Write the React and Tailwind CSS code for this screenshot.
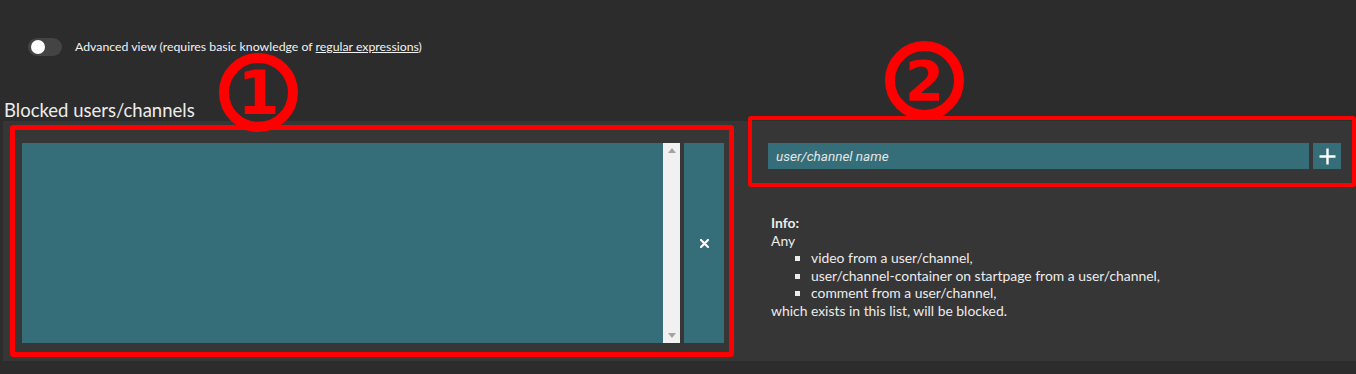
import React from "react";

export default function App() {
  return (
    <div className="relative w-[1356px] h-[374px] overflow-hidden bg-[#2c2c2c] font-['Lato',sans-serif] text-[#f0f0f0]">
      {/* toggle row */}
      <div className="flex items-center gap-[13px] pl-[28px] pt-[38px]">
        <div className="flex h-[18px] w-[34px] items-center rounded-full bg-[#444444] pl-[3px]">
          <div className="h-[14px] w-[14px] rounded-full bg-white" />
        </div>
        <span className="text-[12.3px] leading-[18px] text-[#f2f2f2]">
          Advanced view (requires basic knowledge of{" "}
          <span className="underline">regular expressions</span>)
        </span>
      </div>

      {/* heading */}
      <h2 className="ml-[4px] mt-[44px] text-[18.5px] leading-[20px] text-[#ececec]">
        Blocked users/channels
      </h2>

      {/* panel */}
      <div className="ml-[3px] mt-[1px] flex h-[240px] bg-[#363636]">
        {/* left column */}
        <div className="flex gap-[4px] pl-[19px] pt-[22px]">
          <div className="flex h-[200px] w-[658px]">
            <div className="flex-1 bg-[#356d78]" />
            <div className="flex w-[17px] flex-col items-center justify-between bg-[#f1f1f1] py-[5px]">
              <svg width="8" height="5" viewBox="0 0 8 5">
                <polygon points="4,0 8,5 0,5" fill="#a3a3a3" />
              </svg>
              <svg width="8" height="5" viewBox="0 0 8 5">
                <polygon points="0,0 8,0 4,5" fill="#a3a3a3" />
              </svg>
            </div>
          </div>
          <button className="flex h-[200px] w-[40px] items-center justify-center bg-[#356d78]">
            <svg width="9" height="9" viewBox="0 0 9 9">
              <path d="M1 1 L8 8 M8 1 L1 8" stroke="#ffffff" strokeWidth="2.2" strokeLinecap="square" />
            </svg>
          </button>
        </div>

        {/* right column */}
        <div className="flex flex-1 flex-col pl-[44px] pr-[15px] pt-[22px]">
          <div className="flex h-[26px] gap-[4px]">
            <div className="flex flex-1 items-center bg-[#356d78] pl-[8px]">
              <span className="font-['Roboto',sans-serif] text-[13.5px] italic text-[#e6e6e6]">
                user/channel name
              </span>
            </div>
            <button className="flex w-[28px] items-center justify-center bg-[#356d78]">
              <svg width="17" height="17" viewBox="0 0 17 17">
                <path d="M8.5 0.5 V16.5 M0.5 8.5 H16.5" stroke="#ffffff" strokeWidth="2.4" />
              </svg>
            </button>
          </div>

          <div className="mt-[45px] pl-[3px] text-[13.9px] leading-[17.5px] text-[#ececec]">
            <div className="font-bold">Info:</div>
            <div>Any</div>
            <ul className="list-[square] pl-[40px]">
              <li>video from a user/channel,</li>
              <li>user/channel-container on startpage from a user/channel,</li>
              <li>comment from a user/channel,</li>
            </ul>
            <div>which exists in this list, will be blocked.</div>
          </div>
        </div>
      </div>

      {/* red annotation boxes */}
      <div className="absolute left-[10px] top-[125px] h-[232px] w-[724px] rounded-[3px] border-[5px] border-[#ff0000]" />
      <div className="absolute left-[748px] top-[116px] h-[71px] w-[608px] rounded-[3px] border-[4px] border-[#ff0000]" />

      {/* circled numbers */}
      <div className="absolute left-[219px] top-[53px] flex h-[79px] w-[79px] items-center justify-center rounded-full border-[10px] border-[#ff0000] font-['DejaVu_Sans',sans-serif] text-[60px] font-bold leading-none text-[#ff0000]">
        1
      </div>
      <div className="absolute left-[885px] top-[41px] flex h-[79px] w-[79px] items-center justify-center rounded-full border-[10px] border-[#ff0000] font-['DejaVu_Sans',sans-serif] text-[56px] font-bold leading-none text-[#ff0000]">
        2
      </div>
    </div>
  );
}
